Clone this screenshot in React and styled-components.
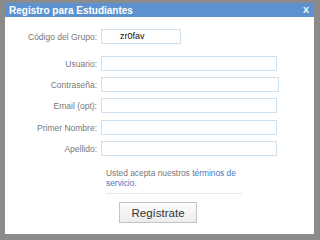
import React from 'react';
import styled, { createGlobalStyle } from 'styled-components';

const GlobalStyle = createGlobalStyle`
	html, body {
		margin: 0;
		padding: 0;
		background: #8b8b8b;
		font-family: "Liberation Sans", Arial, sans-serif;
	}
	body {
		width: 320px;
		height: 240px;
		overflow: hidden;
	}
`;

const Page = styled.div`
	padding: 3px 6px 0 5px;
`;

const Dialog = styled.div`
	width: 309px;
	height: 231px;
	background: #fff;
	display: flex;
	flex-direction: column;
`;

const TitleBar = styled.div`
	height: 14px;
	background: #5d92d0;
	color: #fff;
	display: flex;
	align-items: center;
	justify-content: space-between;
	padding: 0 5px 0 4px;
	font-size: 10px;
	font-weight: bold;
`;

const Close = styled.span`
	font-size: 9px;
	font-weight: bold;
`;

const Form = styled.div`
	display: grid;
	grid-template-columns: 92px auto;
	column-gap: 4px;
	align-items: center;
	padding-top: 12px;
`;

const Label = styled.label`
	text-align: right;
	font-size: 8.5px;
	color: #777;
	margin-top: ${p => p.$top || 0}px;
`;

const Input = styled.div`
	box-sizing: border-box;
	width: ${p => p.$width}px;
	height: 15px;
	border: 1px solid #cfe0f1;
	margin-top: ${p => p.$top || 0}px;
	font-size: 9px;
	color: #111;
	padding-left: 18px;
	line-height: 13px;
`;

const Terms = styled.div`
	margin: 12px 0 0 101px;
	width: 136px;
	font-size: 8.4px;
	line-height: 10px;
	color: #777;
	padding-bottom: 5px;
	border-bottom: 1px solid #e6e6e6;
`;

const Link = styled.span`
	color: #4a78c0;
`;

const ButtonRow = styled.div`
	display: flex;
	padding-left: 114px;
	margin-top: 8px;
`;

const Button = styled.button`
	box-sizing: border-box;
	width: 78px;
	height: 21px;
	border: 1px solid #c4c4c4;
	background: linear-gradient(#fdfdfd, #ececec);
	font-family: "Liberation Sans", Arial, sans-serif;
	font-size: 11.5px;
	color: #333;
	padding: 0;
`;

const fields = [
	{ label: 'Usuario:', width: 176, top: 12 },
	{ label: 'Contraseña:', width: 178, top: 6 },
	{ label: 'Email (opt):', width: 176, top: 6 },
	{ label: 'Primer Nombre:', width: 176, top: 7 },
	{ label: 'Apellido:', width: 176, top: 6 },
];

export default function App() {
	return (
		<Page>
			<GlobalStyle />
			<Dialog>
				<TitleBar>
					<span>Registro para Estudiantes</span>
					<Close>X</Close>
				</TitleBar>
				<Form>
					<Label>Código del Grupo:</Label>
					<Input $width={80}>zr0fav</Input>
					{fields.map(f => (
						<React.Fragment key={f.label}>
							<Label $top={f.top}>{f.label}</Label>
							<Input $width={f.width} $top={f.top} />
						</React.Fragment>
					))}
				</Form>
				<Terms>
					Usted acepta nuestros <Link>términos de servicio</Link>.
				</Terms>
				<ButtonRow>
					<Button>Regístrate</Button>
				</ButtonRow>
			</Dialog>
		</Page>
	);
}
